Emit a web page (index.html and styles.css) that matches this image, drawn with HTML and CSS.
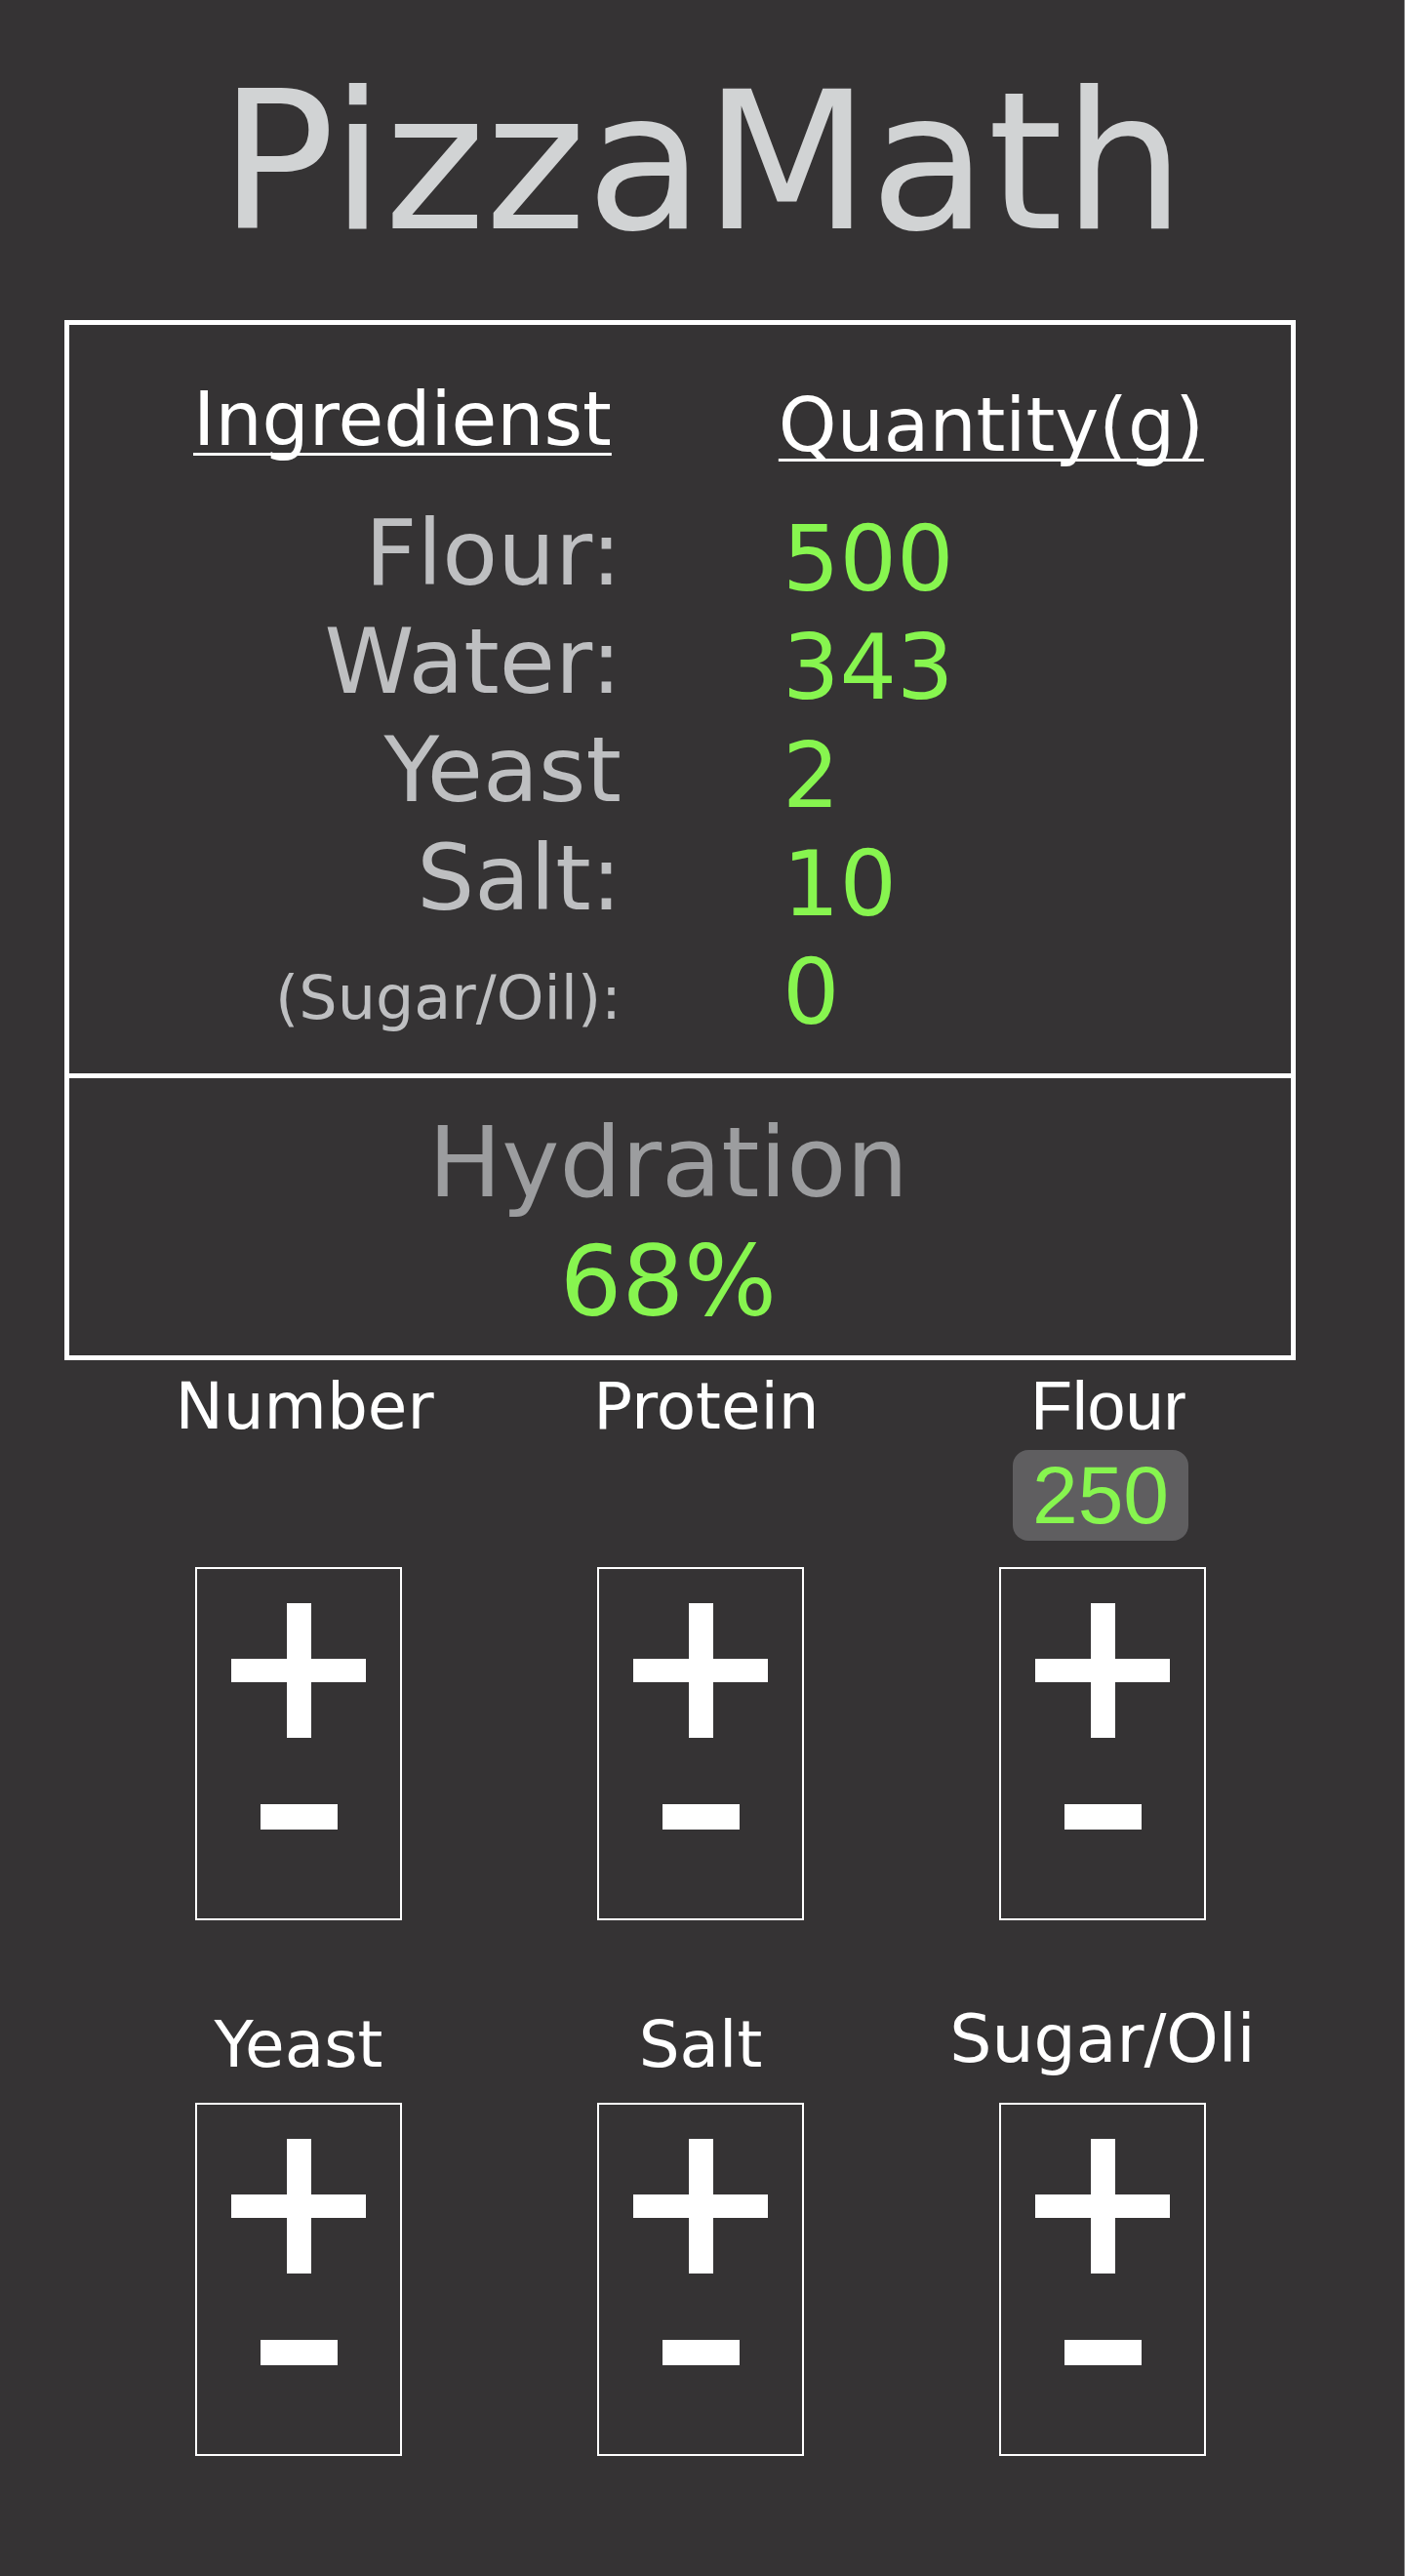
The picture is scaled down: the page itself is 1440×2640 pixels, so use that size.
FILE: index.html
```html
<!DOCTYPE html>
<html lang="en">
<head>
<meta charset="utf-8">
<title>PizzaMath</title>
<link rel="stylesheet" href="styles.css">
</head>
<body>
<div class="page">
  <header class="header">
    <h1 class="title">PizzaMath</h1>
  </header>

  <section class="card">
    <div class="recipe">
      <div class="recipe-head">
        <span class="head-ing">Ingredienst</span>
        <span class="head-qty">Quantity(g)</span>
      </div>
      <div class="rows">
        <div class="lbl">Flour:</div><div class="val">500</div>
        <div class="lbl">Water:</div><div class="val">343</div>
        <div class="lbl">Yeast</div><div class="val">2</div>
        <div class="lbl">Salt:</div><div class="val">10</div>
        <div class="lbl lbl-small">(Sugar/Oil):</div><div class="val">0</div>
      </div>
    </div>
    <div class="hydration">
      <div class="hyd-title">Hydration</div>
      <div class="hyd-value">68%</div>
    </div>
  </section>

  <section class="controls">
    <div class="ctrl first">
      <div class="ctrl-label">Number</div>
      <div class="badge-slot"></div>
      <div class="stepper">
        <svg class="plus" width="138" height="138" viewBox="0 0 138 138"><rect x="57" y="0" width="25" height="138" fill="#fff"/><rect x="0" y="57" width="138" height="24" fill="#fff"/></svg>
        <div class="minus"></div>
      </div>
    </div>
    <div class="ctrl first">
      <div class="ctrl-label">Protein</div>
      <div class="badge-slot"></div>
      <div class="stepper">
        <svg class="plus" width="138" height="138" viewBox="0 0 138 138"><rect x="57" y="0" width="25" height="138" fill="#fff"/><rect x="0" y="57" width="138" height="24" fill="#fff"/></svg>
        <div class="minus"></div>
      </div>
    </div>
    <div class="ctrl first">
      <div class="ctrl-label arial">Flour</div>
      <div class="badge-slot"><div class="badge">250</div></div>
      <div class="stepper">
        <svg class="plus" width="138" height="138" viewBox="0 0 138 138"><rect x="57" y="0" width="25" height="138" fill="#fff"/><rect x="0" y="57" width="138" height="24" fill="#fff"/></svg>
        <div class="minus"></div>
      </div>
    </div>

    <div class="ctrl second">
      <div class="ctrl-label">Yeast</div>
      <div class="stepper">
        <svg class="plus" width="138" height="138" viewBox="0 0 138 138"><rect x="57" y="0" width="25" height="138" fill="#fff"/><rect x="0" y="57" width="138" height="24" fill="#fff"/></svg>
        <div class="minus"></div>
      </div>
    </div>
    <div class="ctrl second">
      <div class="ctrl-label">Salt</div>
      <div class="stepper">
        <svg class="plus" width="138" height="138" viewBox="0 0 138 138"><rect x="57" y="0" width="25" height="138" fill="#fff"/><rect x="0" y="57" width="138" height="24" fill="#fff"/></svg>
        <div class="minus"></div>
      </div>
    </div>
    <div class="ctrl second">
      <div class="ctrl-label raised">Sugar/Oli</div>
      <div class="stepper">
        <svg class="plus" width="138" height="138" viewBox="0 0 138 138"><rect x="57" y="0" width="25" height="138" fill="#fff"/><rect x="0" y="57" width="138" height="24" fill="#fff"/></svg>
        <div class="minus"></div>
      </div>
    </div>
  </section>
</div>
</body>
</html>
```

FILE: styles.css
```css
html, body {
  margin: 0;
  padding: 0;
  background: #353334;
}

.page {
  width: 1440px;
  min-height: 2640px;
  box-sizing: border-box;
  border-right: 1px solid #8f8f8f;
  font-family: "DejaVu Sans", sans-serif;
  color: #ffffff;
}

.header {
  height: 328px;
  box-sizing: border-box;
  padding-top: 51px;
  text-align: center;
}

.title {
  margin: 0;
  font-size: 197px;
  font-weight: normal;
  line-height: normal;
  color: #d1d3d4;
}

.card {
  margin-left: 66px;
  width: 1262px;
  box-sizing: border-box;
  border: 5px solid #ffffff;
}

.recipe {
  padding: 52px 0 33px;
  border-bottom: 5px solid #ffffff;
}

.recipe-head {
  display: flex;
  align-items: flex-start;
  height: 90px;
  line-height: 90px;
  color: #ffffff;
}

.head-ing,
.head-qty {
  text-decoration: underline;
  text-decoration-skip-ink: none;
  text-decoration-thickness: 3px;
  text-underline-offset: 8px;
}

.head-ing {
  font-size: 76px;
  margin-left: 127px;
}

.head-qty {
  font-size: 76px;
  padding-top: 6px;
  margin-left: 171px;
}

.rows {
  margin-top: 37px;
  display: grid;
  grid-template-columns: 566px 1fr;
  column-gap: 165px;
  grid-auto-rows: 111px;
  line-height: 111px;
}

.lbl {
  text-align: right;
  font-size: 93px;
  color: #bebfc1;
}

.lbl-small {
  font-size: 62px;
  margin-top: 11px;
}

.val {
  font-size: 92px;
  color: #87f54f;
  margin-top: 6px;
}

.hydration {
  padding: 26px 24px 14px 0;
  text-align: center;
  font-size: 100px;
  line-height: 122px;
}

.hyd-title {
  color: #9c9d9f;
}

.hyd-value {
  color: #87f54f;
}

.controls {
  padding-top: 9px;
  margin-left: 100px;
  display: grid;
  grid-template-columns: repeat(3, 412px);
  row-gap: 89px;
}

.ctrl {
  display: flex;
  flex-direction: column;
  align-items: center;
}

.ctrl-label {
  font-size: 66px;
  line-height: 77px;
  height: 77px;
  color: #ffffff;
  white-space: nowrap;
}

.ctrl.first .ctrl-label {
  padding-left: 12px;
}

.ctrl-label.arial {
  font-family: "Liberation Sans", Arial, sans-serif;
  font-size: 70px;
}

.ctrl-label.raised {
  font-size: 68px;
  margin-top: -6px;
  margin-bottom: 6px;
}

.badge-slot {
  margin-top: 6px;
  height: 93px;
  display: flex;
  justify-content: center;
}

.badge {
  width: 180px;
  height: 93px;
  margin-left: -4px;
  border-radius: 16px;
  background: #5f5e60;
  color: #87f54f;
  font-family: "Liberation Sans", Arial, sans-serif;
  font-size: 84px;
  line-height: 93px;
  text-align: center;
}

.ctrl.first .stepper {
  margin-top: 27px;
}

.ctrl.second .stepper {
  margin-top: 21px;
}

.stepper {
  width: 212px;
  height: 362px;
  box-sizing: border-box;
  border: 2px solid #ffffff;
  padding-top: 35px;
  display: flex;
  flex-direction: column;
  align-items: center;
}

.plus {
  display: block;
}

.minus {
  margin-top: 68px;
  width: 79px;
  height: 26px;
  background: #ffffff;
}
```
